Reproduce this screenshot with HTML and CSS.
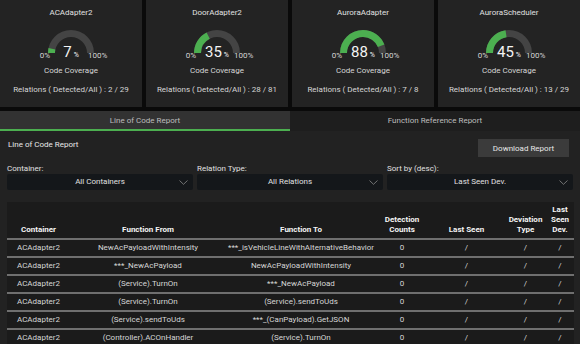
FILE: index.html
```html
<!DOCTYPE html>
<html lang="en">
<head>
    <meta charset="UTF-8">
    <meta name="viewport" content="width=device-width, initial-scale=1.0">
    <title>Coverage Report</title>
    <link rel="stylesheet" href="styles.css">
</head>
<body>
    <div class="card-row">
        <div class="card">
            <div class="card-title">ACAdapter2</div>
            <div class="gauge">
                <span class="gauge-min">0%</span>
                <div class="gauge-dial">
                    <svg width="46" height="23" viewBox="0 0 46 23">
                        <path class="gauge-track" d="M3.5 23 A19.5 19.5 0 0 1 42.5 23"/>
                        <path class="gauge-fill" d="M3.5 23 A19.5 19.5 0 0 1 42.5 23" pathLength="100" stroke-dasharray="7 100"/>
                    </svg>
                    <div class="gauge-value">7<span class="gauge-unit">%</span></div>
                </div>
                <span class="gauge-max">100%</span>
            </div>
            <div class="card-label">Code Coverage</div>
            <div class="card-relations">Relations ( Detected/All ) : 2 / 29</div>
        </div>

        <div class="card">
            <div class="card-title">DoorAdapter2</div>
            <div class="gauge">
                <span class="gauge-min">0%</span>
                <div class="gauge-dial">
                    <svg width="46" height="23" viewBox="0 0 46 23">
                        <path class="gauge-track" d="M3.5 23 A19.5 19.5 0 0 1 42.5 23"/>
                        <path class="gauge-fill" d="M3.5 23 A19.5 19.5 0 0 1 42.5 23" pathLength="100" stroke-dasharray="35 100"/>
                    </svg>
                    <div class="gauge-value">35<span class="gauge-unit">%</span></div>
                </div>
                <span class="gauge-max">100%</span>
            </div>
            <div class="card-label">Code Coverage</div>
            <div class="card-relations">Relations ( Detected/All ) : 28 / 81</div>
        </div>

        <div class="card">
            <div class="card-title">AuroraAdapter</div>
            <div class="gauge">
                <span class="gauge-min">0%</span>
                <div class="gauge-dial">
                    <svg width="46" height="23" viewBox="0 0 46 23">
                        <path class="gauge-track" d="M3.5 23 A19.5 19.5 0 0 1 42.5 23"/>
                        <path class="gauge-fill" d="M3.5 23 A19.5 19.5 0 0 1 42.5 23" pathLength="100" stroke-dasharray="88 100"/>
                    </svg>
                    <div class="gauge-value">88<span class="gauge-unit">%</span></div>
                </div>
                <span class="gauge-max">100%</span>
            </div>
            <div class="card-label">Code Coverage</div>
            <div class="card-relations">Relations ( Detected/All ) : 7 / 8</div>
        </div>

        <div class="card">
            <div class="card-title">AuroraScheduler</div>
            <div class="gauge">
                <span class="gauge-min">0%</span>
                <div class="gauge-dial">
                    <svg width="46" height="23" viewBox="0 0 46 23">
                        <path class="gauge-track" d="M3.5 23 A19.5 19.5 0 0 1 42.5 23"/>
                        <path class="gauge-fill" d="M3.5 23 A19.5 19.5 0 0 1 42.5 23" pathLength="100" stroke-dasharray="45 100"/>
                    </svg>
                    <div class="gauge-value">45<span class="gauge-unit">%</span></div>
                </div>
                <span class="gauge-max">100%</span>
            </div>
            <div class="card-label">Code Coverage</div>
            <div class="card-relations">Relations ( Detected/All ) : 13 / 29</div>
        </div>
    </div>

    <div class="tabs">
        <div class="tab tab-active">Line of Code Report</div>
        <div class="tab">Function Reference Report</div>
    </div>

    <div class="panel">
        <div class="panel-header">
            <div class="panel-title">Line of Code Report</div>
            <button class="download-btn">Download Report</button>
        </div>

        <div class="filters">
            <div class="filter">
                <div class="filter-label">Container:</div>
                <div class="select">
                    <span></span>
                    <span class="select-text">All Containers</span>
                    <svg class="chevron" width="9" height="5" viewBox="0 0 9 5"><polyline points="0.5,0.5 4.5,4.3 8.5,0.5"/></svg>
                </div>
            </div>
            <div class="filter">
                <div class="filter-label">Relation Type:</div>
                <div class="select">
                    <span></span>
                    <span class="select-text">All Relations</span>
                    <svg class="chevron" width="9" height="5" viewBox="0 0 9 5"><polyline points="0.5,0.5 4.5,4.3 8.5,0.5"/></svg>
                </div>
            </div>
            <div class="filter">
                <div class="filter-label">Sort by (desc):</div>
                <div class="select">
                    <span></span>
                    <span class="select-text">Last Seen Dev.</span>
                    <svg class="chevron" width="9" height="5" viewBox="0 0 9 5"><polyline points="0.5,0.5 4.5,4.3 8.5,0.5"/></svg>
                </div>
            </div>
        </div>

        <div class="table-wrap">
            <table class="report-table">
                <colgroup>
                    <col style="width: 63px">
                    <col style="width: 156px">
                    <col style="width: 150px">
                    <col style="width: 52px">
                    <col style="width: 77px">
                    <col style="width: 41px">
                    <col style="width: 28px">
                </colgroup>
                <thead>
                    <tr>
                        <th>Container</th>
                        <th>Function From</th>
                        <th>Function To</th>
                        <th>Detection Counts</th>
                        <th>Last Seen</th>
                        <th>Deviation Type</th>
                        <th>Last Seen Dev.</th>
                    </tr>
                </thead>
                <tbody>
                    <tr>
                        <td>ACAdapter2</td>
                        <td>NewAcPayloadWithIntensity</td>
                        <td>***_isVehicleLineWithAlternativeBehavior</td>
                        <td>0</td>
                        <td>/</td>
                        <td>/</td>
                        <td>/</td>
                    </tr>
                    <tr>
                        <td>ACAdapter2</td>
                        <td>***_NewAcPayload</td>
                        <td>NewAcPayloadWithIntensity</td>
                        <td>0</td>
                        <td>/</td>
                        <td>/</td>
                        <td>/</td>
                    </tr>
                    <tr>
                        <td>ACAdapter2</td>
                        <td>(Service).TurnOn</td>
                        <td>***_NewAcPayload</td>
                        <td>0</td>
                        <td>/</td>
                        <td>/</td>
                        <td>/</td>
                    </tr>
                    <tr>
                        <td>ACAdapter2</td>
                        <td>(Service).TurnOn</td>
                        <td>(Service).sendToUds</td>
                        <td>0</td>
                        <td>/</td>
                        <td>/</td>
                        <td>/</td>
                    </tr>
                    <tr>
                        <td>ACAdapter2</td>
                        <td>(Service).sendToUds</td>
                        <td>***_(CanPayload).GetJSON</td>
                        <td>0</td>
                        <td>/</td>
                        <td>/</td>
                        <td>/</td>
                    </tr>
                    <tr>
                        <td>ACAdapter2</td>
                        <td>(Controller).ACOnHandler</td>
                        <td>(Service).TurnOn</td>
                        <td>0</td>
                        <td>/</td>
                        <td>/</td>
                        <td>/</td>
                    </tr>
                </tbody>
            </table>
        </div>
    </div>
</body>
</html>
```

FILE: styles.css
```css
html, body {
    margin: 0;
    height: 100%;
    overflow: hidden;
}

body {
    background: #0a0a0a;
    font-family: Roboto, "Liberation Sans", sans-serif;
    font-size: 8px;
    color: #d6d6d6;
}

.card-row {
    display: grid;
    grid-template-columns: repeat(4, 1fr);
    gap: 4px;
}

.card {
    background: #232323;
    height: 107px;
    padding-top: 8px;
    box-sizing: border-box;
    text-align: center;
}

.card-title {
    line-height: 10px;
    color: #e0e0e0;
}

.gauge {
    display: grid;
    grid-template-columns: 1fr 46px 1fr;
    align-items: end;
    margin-top: 12px;
    height: 33px;
}

.gauge-min,
.gauge-max {
    line-height: 8px;
    margin-bottom: 3px;
}

.gauge-min {
    justify-self: end;
    margin-right: -2px;
}

.gauge-max {
    justify-self: start;
    margin-left: -6px;
}

.gauge-dial {
    position: relative;
    height: 33px;
}

.gauge-dial svg {
    display: block;
}

.gauge-track {
    fill: none;
    stroke: #444;
    stroke-width: 7;
}

.gauge-fill {
    fill: none;
    stroke: #4caf50;
    stroke-width: 7;
}

.gauge-value {
    position: absolute;
    left: -10px;
    right: -10px;
    bottom: 0;
    font-size: 15px;
    line-height: 15px;
    color: #f4f4f4;
}

.gauge-unit {
    font-size: 7px;
    margin-left: 2px;
}

.card-label {
    margin-top: 3px;
    line-height: 10px;
}

.card-relations {
    margin-top: 9px;
    line-height: 10px;
}

.tabs {
    display: grid;
    grid-template-columns: 1fr 1fr;
    margin-top: 4px;
}

.tab {
    height: 20px;
    line-height: 20px;
    text-align: center;
    background: #1e1e1e;
    color: #bdbdbd;
}

.tab-active {
    background: #323232;
    box-shadow: inset 0 -2px #4caf50;
}

.panel {
    background: #222;
    padding: 0 6px 0 7px;
    height: 300px;
}

.panel-header {
    display: flex;
    justify-content: space-between;
    align-items: flex-start;
    padding: 8px 5px 0 1px;
}

.panel-title {
    line-height: 11px;
    color: #e8e8e8;
}

.download-btn {
    width: 91px;
    height: 18px;
    padding: 0;
    border: none;
    background: #3b3b3b;
    color: #e8e8e8;
    font-family: inherit;
    font-size: 8px;
}

.filters {
    display: grid;
    grid-template-columns: repeat(3, 1fr);
    gap: 4px;
    margin-right: 1px;
}

.filter-label {
    margin-top: 7px;
    line-height: 10px;
    color: #e0e0e0;
}

.select {
    display: grid;
    grid-template-columns: 14px 1fr 14px;
    align-items: center;
    height: 16px;
    background: #14171a;
    border-radius: 2px;
}

.select-text {
    text-align: center;
    line-height: 16px;
    color: #e0e0e0;
}

.chevron {
    display: block;
    fill: none;
    stroke: #8a8a8a;
    stroke-width: 0.8;
}

.table-wrap {
    margin-top: 12px;
    background: #1b1b1b;
}

.report-table {
    width: 100%;
    table-layout: fixed;
    border-collapse: separate;
    border-spacing: 0;
}

.report-table th {
    padding: 3px 1px;
    vertical-align: bottom;
    line-height: 10px;
    font-weight: bold;
    color: #f4f4f4;
    text-align: center;
    border-bottom: 2px solid #6f6f6f;
}

.report-table td {
    height: 16px;
    padding: 0 1px;
    line-height: 16px;
    text-align: center;
    white-space: nowrap;
    color: #d6d6d6;
    border-bottom: 2px solid #6f6f6f;
}
```
